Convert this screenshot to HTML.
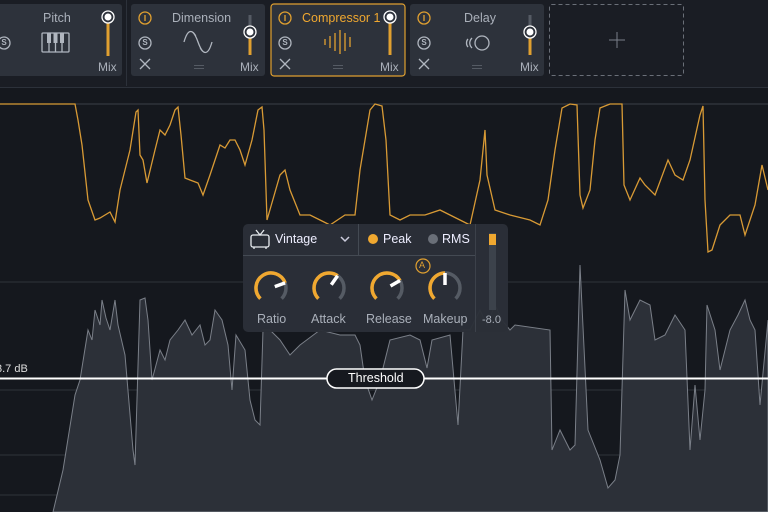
<!DOCTYPE html><html><head><style>
*{margin:0;padding:0;box-sizing:border-box}
body{width:768px;height:512px;overflow:hidden;background:#15181e;font-family:"Liberation Sans",sans-serif;position:relative}
.t{position:absolute;font-size:12px;color:#aab0ba;white-space:nowrap}
.s{position:absolute;font-size:8px;font-weight:bold;color:#b0b6bf;width:12px;text-align:center}
</style></head><body>
<svg width="768" height="512" style="position:absolute;left:0;top:0">
<rect x="0" y="0" width="768" height="88" fill="#1a1d24"/>
<line x1="0" y1="87.5" x2="768" y2="87.5" stroke="#2c313a"/>
<line x1="126.5" y1="0" x2="126.5" y2="86" stroke="#2c313a"/>
<line x1="0" y1="104" x2="768" y2="104" stroke="#3a3f48"/>
<g stroke="#2e333b" stroke-width="1"><line x1="0" y1="282" x2="768" y2="282"/><line x1="0" y1="390" x2="768" y2="390"/><line x1="0" y1="455" x2="768" y2="455"/><line x1="0" y1="495" x2="768" y2="495"/></g>
<polygon fill="#2c3038" stroke="#7a7f88" stroke-width="1" points="53,512 63,470 75,395 80,380 88,330 92,340 95,310 100,325 102,300 106,318 110,330 115,300 118,325 125,355 133,450 135,465 140,300 145,298 148,320 152,380 160,350 165,360 170,340 178,330 185,320 192,335 200,325 205,345 210,340 215,310 222,320 228,345 232,390 236,335 245,350 250,400 255,420 260,425 263,330 270,330 280,340 290,355 300,345 320,330 340,335 355,335 360,345 365,380 372,400 380,380 390,340 410,335 420,340 427,368 432,340 450,335 458,425 463,330 470,330 480,310 487,325 495,305 502,320 510,330 515,325 550,330 552,450 560,430 570,450 575,445 580,265 588,430 600,460 608,488 615,480 620,455 625,290 630,320 635,310 640,300 650,305 655,340 665,335 675,315 685,330 690,450 695,385 700,440 705,390 707,305 715,330 720,370 730,330 738,315 745,300 750,320 755,330 760,405 768,320 768,512"/>
<polyline fill="none" stroke="#d89a35" stroke-width="1.3" points="0,104 75,104 78,120 82,145 88,200 95,220 100,218 110,212 115,222 120,190 130,150 136,112 138,110 140,155 143,160 147,183 155,150 160,130 165,135 170,125 175,110 178,107 181,135 185,178 190,180 198,183 203,195 210,175 220,145 225,148 230,140 235,140 240,150 245,165 252,140 258,110 262,107 264,130 267,220 280,175 285,170 290,190 300,215 310,215 320,220 330,225 345,215 355,215 360,170 370,110 375,104 382,106 386,140 390,215 400,220 410,215 425,215 440,210 460,220 470,225 480,180 485,130 487,175 495,210 510,215 530,220 540,225 548,200 555,150 562,108 570,104 577,105 580,195 583,208 590,190 595,140 600,108 610,104 622,104 624,185 630,200 640,178 645,185 655,195 668,160 675,175 683,180 690,160 700,115 703,106 705,200 708,252 712,250 720,225 730,215 740,215 745,235 755,205 762,165 768,190"/>
<line x1="0" y1="378.5" x2="768" y2="378.5" stroke="#fff" stroke-width="2"/>
<rect x="327" y="369" width="97" height="19" rx="9.5" fill="#16191f" stroke="#fff" stroke-width="1.5"/>
<rect x="-4" y="4" width="126" height="72" rx="3" fill="#2d323b"/>
<rect x="131" y="4" width="134" height="72" rx="3" fill="#2d323b"/>
<rect x="271" y="4" width="134" height="72" rx="3" fill="#2d323b" stroke="#e0a030" stroke-width="1.2"/>
<rect x="410" y="4" width="134" height="72" rx="3" fill="#2d323b"/>
<rect x="549.5" y="4.5" width="134" height="71" rx="2" fill="none" stroke="#6a6f78" stroke-dasharray="4,3"/>
<path d="M617 32v16M609 40h16" stroke="#7a808a" stroke-width="1"/>
<g fill="none" stroke-width="1.3">
<circle cx="4" cy="43" r="6" stroke="#b0b6bf"/>
<circle cx="145" cy="18" r="6" stroke="#e0a030"/><line x1="145" y1="15" x2="145" y2="21" stroke="#e0a030"/>
<circle cx="145" cy="43" r="6" stroke="#b0b6bf"/>
<path d="M140 59l10 10M150 59l-10 10" stroke="#b0b6bf"/>
<circle cx="285" cy="18" r="6" stroke="#e0a030"/><line x1="285" y1="15" x2="285" y2="21" stroke="#e0a030"/>
<circle cx="285" cy="43" r="6" stroke="#b0b6bf"/>
<path d="M280 59l10 10M290 59l-10 10" stroke="#b0b6bf"/>
<circle cx="424" cy="18" r="6" stroke="#e0a030"/><line x1="424" y1="15" x2="424" y2="21" stroke="#e0a030"/>
<circle cx="424" cy="43" r="6" stroke="#b0b6bf"/>
<path d="M419 59l10 10M429 59l-10 10" stroke="#b0b6bf"/>
<rect x="42" y="33" width="27" height="19" rx="1" stroke="#b0b6bf"/>
<path d="M49 33v19M55.5 33v19M62 33v19" stroke="#b0b6bf"/>
<path d="M47 33h4v10h-4zM53.5 33h4v10h-4zM60 33h4v10h-4z" fill="#b0b6bf" stroke="none"/>
<path d="M184 42c4-14 9-14 14 0s10 14 14 0" stroke="#b0b6bf"/>
<path d="M186 36c3-6 7-6 10 0M200 48c3 6 7 6 10 0" stroke="#b0b6bf" stroke-width="0.8"/>
<path d="M325 39v6M330 36v12M335 33v18M340 30v24M345 33v18M350 37v10" stroke="#e0a030"/>
<circle cx="482" cy="43" r="7" stroke="#b0b6bf"/>
<path d="M472 38c-3 3-3 7 0 10M468 39c-2 2-2 6 0 8" stroke="#b0b6bf"/>
<line x1="108" y1="17" x2="108" y2="56" stroke="#e0a030" stroke-width="3"/><circle cx="108" cy="17" r="6" fill="#2d323b" stroke="#fff"/><circle cx="108" cy="17" r="3.5" fill="#fff" stroke="none"/>
<line x1="250" y1="15" x2="250" y2="32" stroke="#555b64" stroke-width="3"/><line x1="250" y1="32" x2="250" y2="55" stroke="#e0a030" stroke-width="3"/><circle cx="250" cy="32" r="6" fill="#2d323b" stroke="#fff"/><circle cx="250" cy="32" r="3.5" fill="#fff" stroke="none"/>
<line x1="390" y1="17" x2="390" y2="55" stroke="#e0a030" stroke-width="3"/><circle cx="390" cy="17" r="6" fill="#2d323b" stroke="#fff"/><circle cx="390" cy="17" r="3.5" fill="#fff" stroke="none"/>
<line x1="530" y1="15" x2="530" y2="32" stroke="#555b64" stroke-width="3"/><line x1="530" y1="32" x2="530" y2="55" stroke="#e0a030" stroke-width="3"/><circle cx="530" cy="32" r="6" fill="#2d323b" stroke="#fff"/><circle cx="530" cy="32" r="3.5" fill="#fff" stroke="none"/>
</g>
<g fill="#555b64"><rect x="194" y="65" width="10" height="1"/><rect x="194" y="68" width="10" height="1"/><rect x="333" y="65" width="10" height="1"/><rect x="333" y="68" width="10" height="1"/><rect x="472" y="65" width="10" height="1"/><rect x="472" y="68" width="10" height="1"/></g>
<rect x="243" y="224" width="265" height="108" rx="5" fill="#2b3038" opacity="0.97"/>
<line x1="243" y1="255.5" x2="475" y2="255.5" stroke="#444a53"/>
<line x1="358.5" y1="224" x2="358.5" y2="255" stroke="#444a53"/>
<line x1="475.5" y1="224" x2="475.5" y2="332" stroke="#3c414a"/>
<rect x="489" y="233" width="7" height="77" fill="#3c424b"/>
<rect x="489" y="234" width="7" height="11" fill="#f0a830"/>
<g fill="none" stroke="#e8ecf0" stroke-width="1.3"><rect x="251" y="235" width="18" height="12" rx="2"/><path d="M256 230l4 5 4-5M254 247v2M266 247v2"/></g>
<path d="M341 237l4 4 4-4" fill="none" stroke="#ccd" stroke-width="1.5"/>
<circle cx="373" cy="239" r="5" fill="#f0a830"/><circle cx="433" cy="239" r="5" fill="#6a6f78"/>
<circle cx="423" cy="266" r="7" fill="none" stroke="#e0a030" stroke-width="1.2"/>
<g fill="none" stroke-width="3.5" stroke-linecap="butt">
<g transform="translate(271,288)"><path d="M-10.6 10.6A15 15 0 1 1 10.6 10.6" stroke="#555b64"/><path d="M-10.6 10.6A15 15 0 1 1 14.1 -5.1" stroke="#f0a830"/><line x1="3.8" y1="-1.4" x2="14.1" y2="-5.1" stroke="#fff"/></g>
<g transform="translate(329,288)"><path d="M-10.6 10.6A15 15 0 1 1 10.6 10.6" stroke="#555b64"/><path d="M-10.6 10.6A15 15 0 0 1 8.6 -12.3" stroke="#f0a830"/><line x1="2.3" y1="-3.3" x2="8.6" y2="-12.3" stroke="#fff"/></g>
<g transform="translate(387,288)"><path d="M-10.6 10.6A15 15 0 1 1 10.6 10.6" stroke="#555b64"/><path d="M-10.6 10.6A15 15 0 1 1 13 -7.5" stroke="#f0a830"/><line x1="3.5" y1="-2" x2="13" y2="-7.5" stroke="#fff"/></g>
<g transform="translate(445,288)"><path d="M-10.6 10.6A15 15 0 1 1 10.6 10.6" stroke="#555b64"/><path d="M-10.6 10.6A15 15 0 0 1 0 -15" stroke="#f0a830"/><line x1="0" y1="-3" x2="0" y2="-15" stroke="#fff"/></g>
</g>
</svg>
<div class="s" style="left:-2px;top:38px">S</div>
<div class="s" style="left:139px;top:38px">S</div>
<div class="s" style="left:279px;top:38px">S</div>
<div class="s" style="left:418px;top:38px">S</div>
<div class="t" style="left:43px;top:11px;font-size:12.5px">Pitch</div>
<div class="t" style="left:98px;top:60px">Mix</div>
<div class="t" style="left:172px;top:11px;font-size:12.5px">Dimension</div>
<div class="t" style="left:240px;top:60px">Mix</div>
<div class="t" style="left:302px;top:11px;color:#f0a830;font-size:12.5px">Compressor 1</div>
<div class="t" style="left:380px;top:60px">Mix</div>
<div class="t" style="left:464px;top:11px;font-size:12.5px">Delay</div>
<div class="t" style="left:520px;top:60px">Mix</div>
<div class="t" style="left:-4px;top:363px;font-size:11px;color:#ddd">3.7 dB</div>
<div class="t" style="left:348px;top:371px;color:#fff;font-size:12.5px">Threshold</div>
<div class="t" style="left:275px;top:232px;color:#eef;font-size:12.5px">Vintage</div>
<div class="t" style="left:383px;top:232px;color:#eef;font-size:12.5px">Peak</div>
<div class="t" style="left:442px;top:232px;color:#eef;font-size:12.5px">RMS</div>
<div class="t" style="left:419px;top:260px;font-size:9px;color:#e0a030">A</div>
<div class="t" style="left:257px;top:312px;font-size:12.5px">Ratio</div>
<div class="t" style="left:311px;top:312px;font-size:12.5px">Attack</div>
<div class="t" style="left:366px;top:312px;font-size:12.5px">Release</div>
<div class="t" style="left:423px;top:312px;font-size:12.5px">Makeup</div>
<div class="t" style="left:482px;top:314px;font-size:11px">-8.0</div>
</body></html>
